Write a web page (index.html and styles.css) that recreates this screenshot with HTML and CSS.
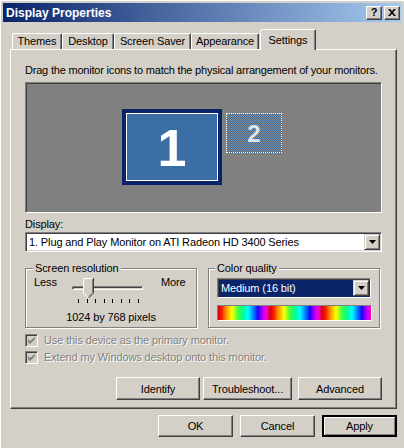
FILE: index.html
```html
<!DOCTYPE html>
<html lang="en">
<head>
    <meta charset="UTF-8">
    <title>Display Properties</title>
    <link rel="stylesheet" href="styles.css">
</head>
<body>
    <div class="window">
        <div class="titlebar">
            <span class="title">Display Properties</span>
            <div class="caption-buttons">
                <button class="cap-btn help">?</button>
                <button class="cap-btn">
                    <svg width="8" height="7" viewBox="0 0 8 7"><path d="M0 0h2l2 2.2L6 0h2L5 3.5 8 7H6L4 4.8 2 7H0l3-3.5z" fill="#000"/></svg>
                </button>
            </div>
        </div>
        <div class="client">
            <div class="tabs">
                <div class="tab w-themes">Themes</div>
                <div class="tab w-desktop">Desktop</div>
                <div class="tab w-saver">Screen Saver</div>
                <div class="tab w-appearance">Appearance</div>
                <div class="tab active w-settings">Settings</div>
            </div>
            <div class="panel">
                <p class="hint">Drag the monitor icons to match the physical arrangement of your monitors.</p>
                <div class="monitors">
                    <div class="mon mon1">1</div>
                    <div class="mon mon2">2</div>
                </div>
                <div class="field-label">Display:</div>
                <div class="select">
                    <span class="select-text">1. Plug and Play Monitor on ATI Radeon HD 3400 Series</span>
                    <span class="drop-btn"><svg width="7" height="4" viewBox="0 0 7 4"><path d="M0 0h7L3.5 4z" fill="#000"/></svg></span>
                </div>
                <div class="groups">
                    <fieldset class="group">
                        <legend class="res-legend">Screen resolution</legend>
                        <div class="slider-row">
                            <span class="less">Less</span>
                            <div class="slider">
                                <div class="track"></div>
                                <svg class="thumb" width="11" height="20" viewBox="0 0 11 20">
                                    <path d="M0 0H11V15L5.5 20L0 15Z" fill="#d4d0c8"/>
                                    <path d="M0.5 15V0.5H10" stroke="#fff" fill="none"/>
                                    <path d="M0.5 15L5 19.5" stroke="#fff" fill="none"/>
                                    <path d="M10.5 0V15.2L5.6 20" stroke="#404040" fill="none"/>
                                    <path d="M9.5 1V14.8L5.5 18.8" stroke="#808080" fill="none"/>
                                </svg>
                            </div>
                            <span class="more">More</span>
                        </div>
                        <div class="ticks">
                            <i></i><i></i><i></i><i></i><i></i><i></i><i></i><i></i>
                        </div>
                        <div class="res-label">1024 by 768 pixels</div>
                    </fieldset>
                    <fieldset class="group">
                        <legend class="color-legend">Color quality</legend>
                        <div class="select dark color-select">
                            <span class="select-text">Medium (16 bit)</span>
                            <span class="drop-btn"><svg width="7" height="4" viewBox="0 0 7 4"><path d="M0 0h7L3.5 4z" fill="#000"/></svg></span>
                        </div>
                        <div class="spectrum"></div>
                    </fieldset>
                </div>
                <div class="checks">
                    <div class="check">
                        <span class="checkbox"><svg width="7" height="7" viewBox="0 0 7 7"><path d="M0 2v3l2 2 5-5V-0L2 4z" fill="#808080"/></svg></span>
                        <span>Use this device as the primary monitor.</span>
                    </div>
                    <div class="check">
                        <span class="checkbox"><svg width="7" height="7" viewBox="0 0 7 7"><path d="M0 2v3l2 2 5-5V-0L2 4z" fill="#808080"/></svg></span>
                        <span>Extend my Windows desktop onto this monitor.</span>
                    </div>
                </div>
                <div class="panel-buttons">
                    <button class="btn w-identify">Identify</button>
                    <button class="btn w-trouble">Troubleshoot...</button>
                    <button class="btn w-advanced">Advanced</button>
                </div>
            </div>
            <div class="dialog-buttons">
                <button class="btn dlg">OK</button>
                <button class="btn dlg">Cancel</button>
                <button class="btn dlg default">Apply</button>
            </div>
        </div>
    </div>
</body>
</html>
```
FILE: styles.css
```css
body {
    margin: 0;
    background-color: #d4d0c8;
    font-family: "Liberation Sans", Arial, sans-serif;
    font-size: 11px;
    letter-spacing: -0.12px;
    color: #000;
}
.window {
    width: 404px;
    height: 448px;
    box-sizing: border-box;
    padding: 3px 3px 0 3px;
    box-shadow: inset 1px 1px #fff;
    overflow: hidden;
}
.titlebar {
    height: 19px;
    display: flex;
    align-items: center;
    justify-content: space-between;
    padding: 0 1px 0 3px;
    background: linear-gradient(to right, #0a246a, #a6caf0);
}
.title {
    color: white;
    font-weight: bold;
    font-size: 12px;
    letter-spacing: 0;
}
.caption-buttons {
    display: flex;
    gap: 2px;
}
.cap-btn {
    width: 16px;
    height: 14px;
    box-sizing: border-box;
    padding: 0;
    background-color: #d4d0c8;
    border: 1px solid;
    border-color: #fff #404040 #404040 #fff;
    box-shadow: inset -1px -1px #808080;
    display: flex;
    align-items: center;
    justify-content: center;
    font-family: "Liberation Sans", Arial, sans-serif;
    font-weight: bold;
    font-size: 11px;
    line-height: 1;
}
.client {
    padding: 0 4px 0 7px;
}

/* tabs */
.tabs {
    display: flex;
    align-items: flex-end;
    height: 21px;
    margin-top: 7px;
    margin-bottom: -1px;
    padding-left: 2px;
    position: relative;
    z-index: 1;
}
.tab {
    height: 16px;
    box-sizing: border-box;
    margin-bottom: 1px;
    border-top: 1px solid #fff;
    border-left: 1px solid #fff;
    border-right: 1px solid #404040;
    box-shadow: inset -1px 0 #808080;
    border-radius: 2px 2px 0 0;
    text-align: center;
    line-height: 15px;
}
.tab.active {
    height: 21px;
    margin-bottom: 0;
    margin-left: 1px;
    padding-top: 3px;
    background-color: #d4d0c8;
}
.w-themes { width: 50px; }
.w-desktop { width: 52px; }
.w-saver { width: 77px; }
.w-appearance { width: 68px; }
.w-settings { width: 56px; }

.panel {
    border: 1px solid;
    border-color: #fff #404040 #404040 #fff;
    box-shadow: inset -1px -1px #808080;
    padding: 14px 14px 8px 14px;
}
.hint {
    margin: 0;
    line-height: 13px;
    white-space: nowrap;
    letter-spacing: -0.2px;
}

/* monitor arrangement */
.monitors {
    position: relative;
    height: 131px;
    box-sizing: border-box;
    margin-top: 5px;
    background-color: #808080;
    border: 1px solid;
    border-color: #808080 #fff #fff #808080;
    box-shadow: inset 1px 1px #404040;
}
.mon {
    position: absolute;
    box-sizing: border-box;
    display: flex;
    align-items: center;
    justify-content: center;
    font-weight: bold;
    line-height: 1;
    letter-spacing: 0;
}
.mon1 {
    left: 96px;
    top: 26px;
    width: 100px;
    height: 76px;
    border: 4px solid #0a246a;
    box-shadow: inset 0 0 0 1px #fff;
    background-color: #3a6ea5;
    color: white;
    font-size: 52px;
    padding-top: 2px;
}
.mon2 {
    left: 200px;
    top: 30px;
    width: 56px;
    height: 40px;
    border: 1px dotted #fff;
    background: repeating-conic-gradient(#3a6ea5 0 25%, #8a8a8a 0 50%) 0 0 / 2px 2px;
    color: #dfe5ec;
    font-size: 24px;
    padding-top: 1px;
}

.field-label {
    margin-top: 5px;
    line-height: 13px;
}
.select {
    margin-top: 1px;
    height: 20px;
    box-sizing: border-box;
    display: flex;
    align-items: center;
    background-color: white;
    border: 1px solid;
    border-color: #808080 #fff #fff #808080;
    box-shadow: inset 1px 1px #404040, inset -1px -1px #d4d0c8;
    padding: 1px 1px 1px 3px;
}
.select-text {
    flex: 1;
    white-space: nowrap;
}
.drop-btn {
    width: 16px;
    height: 16px;
    box-sizing: border-box;
    background-color: #d4d0c8;
    border: 1px solid;
    border-color: #d4d0c8 #404040 #404040 #d4d0c8;
    box-shadow: inset 1px 1px #fff, inset -1px -1px #808080;
    display: flex;
    align-items: center;
    justify-content: center;
}
.select.dark {
    background-color: #0a246a;
    color: white;
    box-shadow: inset 1px 1px #404040, inset -1px -1px #0a246a;
}

/* group boxes */
.groups {
    display: flex;
    gap: 11px;
    margin-top: 10px;
}
.group {
    margin: 0;
    padding: 0 0 3px 0;
    min-width: 0;
    width: 172px;
    box-sizing: border-box;
    border: 1px solid #808080;
    box-shadow: inset 1px 1px #fff, 1px 1px #fff;
}
.group legend {
    padding: 0 2px;
    line-height: 13px;
    background-color: #d4d0c8;
}
.res-legend { margin-left: 7px; }
.color-legend { margin-left: 6px; }

.slider-row {
    display: flex;
    height: 22px;
    margin: 1px 0 0 8px;
    line-height: 13px;
}
.less { width: 38px; }
.slider {
    position: relative;
    width: 71px;
}
.track {
    position: absolute;
    left: 0;
    right: 0;
    top: 10px;
    height: 4px;
    box-sizing: border-box;
    border: 1px solid;
    border-color: #808080 #fff #fff #808080;
    box-shadow: inset 1px 1px #404040;
}
.thumb {
    position: absolute;
    left: 11px;
    top: 2px;
}
.more { margin-left: 18px; }
.ticks {
    display: flex;
    justify-content: space-between;
    width: 61px;
    height: 6px;
    box-sizing: border-box;
    padding-top: 1px;
    margin-left: 52px;
}
.ticks i {
    width: 1px;
    height: 4px;
    background-color: #000;
}
.res-label {
    margin-top: 7px;
    text-align: center;
    line-height: 13px;
}
.color-select {
    width: 154px;
    margin: 3px 0 0 8px;
}
.spectrum {
    width: 155px;
    height: 16px;
    box-sizing: border-box;
    margin: 7px 0 0 8px;
    border: 1px solid;
    border-color: #808080 #fff #fff #808080;
    background: repeating-linear-gradient(to right, #d00010 0, #ff2000 4px, #ff9000 8px, #ffff00 14px, #40ff40 20px, #00ff90 25px, #00ffff 30px, #0070ff 36px, #2000ff 40px, #c000ff 45px, #ff00c0 49px, #d00010 52px);
}

/* checkboxes */
.checks {
    margin-top: 6px;
}
.check {
    display: flex;
    align-items: flex-start;
    gap: 6px;
    height: 17px;
    line-height: 13px;
    color: #808080;
    text-shadow: 1px 1px #fff;
}
.checkbox {
    width: 13px;
    height: 13px;
    box-sizing: border-box;
    border: 1px solid;
    border-color: #808080 #fff #fff #808080;
    box-shadow: inset 1px 1px #404040, inset -1px -1px #d4d0c8;
    background-color: #d4d0c8;
    display: flex;
    align-items: center;
    justify-content: center;
}

/* buttons */
.btn {
    height: 23px;
    box-sizing: border-box;
    padding: 0;
    background-color: #d4d0c8;
    border: 1px solid;
    border-color: #fff #404040 #404040 #fff;
    box-shadow: inset -1px -1px #808080;
    font-family: "Liberation Sans", Arial, sans-serif;
    font-size: 11px;
    letter-spacing: -0.12px;
    color: #000;
}
.panel-buttons {
    display: flex;
    justify-content: flex-end;
    margin-top: 9px;
}
.w-identify { width: 84px; }
.w-trouble { width: 89px; margin-left: 3px; }
.w-advanced { width: 84px; margin-left: 6px; }
.dialog-buttons {
    display: flex;
    justify-content: flex-end;
    gap: 7px;
    margin-top: 6px;
}
.btn.dlg {
    width: 75px;
    height: 22px;
}
.btn.default {
    border: 2px solid #000;
    box-shadow: inset 1px 1px #fff, inset -1px -1px #808080;
}
```
